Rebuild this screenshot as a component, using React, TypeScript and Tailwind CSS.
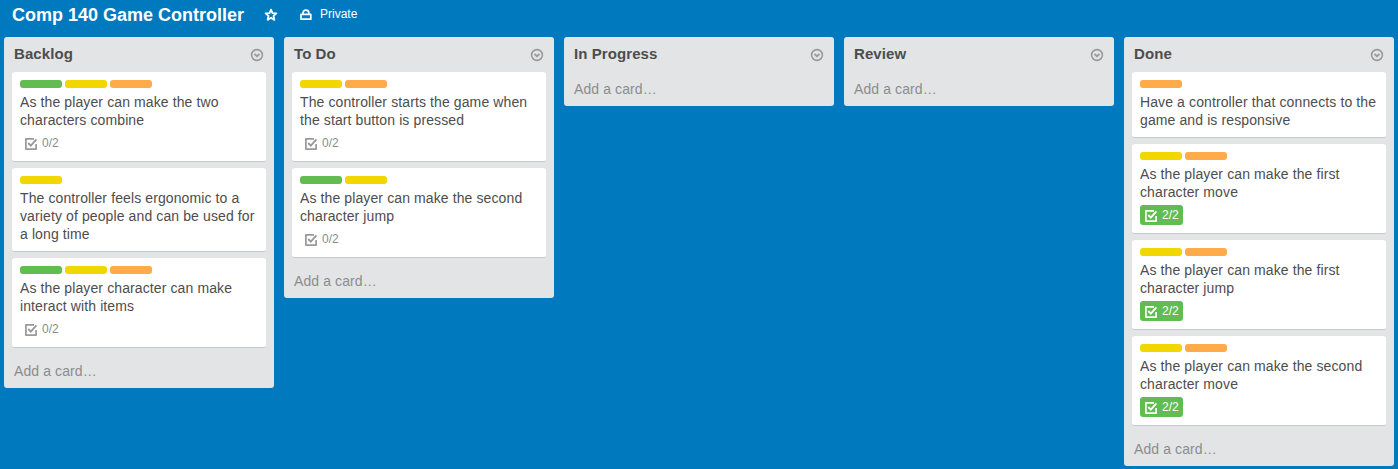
type Label = 'green' | 'yellow' | 'orange';

interface Card {
  labels: Label[];
  lines: string[];
  progress?: string;
  complete?: boolean;
}

interface List {
  title: string;
  cards: Card[];
}

const labelColors: Record<Label, string> = {
  green: 'bg-[#61bd4f]',
  yellow: 'bg-[#f2d600]',
  orange: 'bg-[#ffab4a]',
};

const lists: List[] = [
  {
    title: 'Backlog',
    cards: [
      { labels: ['green', 'yellow', 'orange'], lines: ['As the player can make the two', 'characters combine'], progress: '0/2' },
      { labels: ['yellow'], lines: ['The controller feels ergonomic to a', 'variety of people and can be used for', 'a long time'] },
      { labels: ['green', 'yellow', 'orange'], lines: ['As the player character can make', 'interact with items'], progress: '0/2' },
    ],
  },
  {
    title: 'To Do',
    cards: [
      { labels: ['yellow', 'orange'], lines: ['The controller starts the game when', 'the start button is pressed'], progress: '0/2' },
      { labels: ['green', 'yellow'], lines: ['As the player can make the second', 'character jump'], progress: '0/2' },
    ],
  },
  { title: 'In Progress', cards: [] },
  { title: 'Review', cards: [] },
  {
    title: 'Done',
    cards: [
      { labels: ['orange'], lines: ['Have a controller that connects to the', 'game and is responsive'] },
      { labels: ['yellow', 'orange'], lines: ['As the player can make the first', 'character move'], progress: '2/2', complete: true },
      { labels: ['yellow', 'orange'], lines: ['As the player can make the first', 'character jump'], progress: '2/2', complete: true },
      { labels: ['yellow', 'orange'], lines: ['As the player can make the second', 'character move'], progress: '2/2', complete: true },
    ],
  },
];

function StarIcon() {
  return (
    <svg width="14" height="14" viewBox="0 0 14 14" fill="none" stroke="currentColor" strokeWidth="1.8" strokeLinejoin="round">
      <path d="M7 1.6 8.5 5.1 12.4 5.4 9.5 7.9 10.4 11.9 7 9.8 3.6 11.9 4.5 7.9 1.6 5.4 5.5 5.1Z" />
    </svg>
  );
}

function LockIcon() {
  return (
    <svg width="12" height="12" viewBox="0 0 12 12" fill="none" stroke="currentColor" strokeWidth="1.7" strokeLinejoin="round">
      <path d="M1 5.3h9.8v4.9H1zM3 5.3V4a2.9 2.9 0 0 1 5.8 0v1.3" />
    </svg>
  );
}

function MenuIcon() {
  return (
    <svg width="14" height="14" viewBox="0 0 14 14" fill="none" stroke="currentColor">
      <circle cx="7" cy="7" r="5.4" strokeWidth="1.6" />
      <path d="M4.5 6 7 8.2 9.5 6" strokeWidth="1.8" />
    </svg>
  );
}

function ChecklistIcon() {
  return (
    <svg className="shrink-0" width="14" height="14" viewBox="0 0 14 14" fill="none" stroke="currentColor" strokeWidth="1.7">
      <path d="M10 1.9H1.9v10.2h10.2V7" strokeLinejoin="round" />
      <path d="M4.2 6 6.8 8.6 12.4 2.4" strokeWidth="1.9" />
    </svg>
  );
}

function CardView({ card }: { card: Card }) {
  return (
    <article className="mb-1.5 rounded-[3px] border-b border-[#c4c9cc] bg-white p-2">
      <div className="mb-[5px] flex gap-[3px]">
        {card.labels.map((label) => (
          <span key={label} className={`h-2 w-[42px] rounded-[3px] ${labelColors[label]}`} />
        ))}
      </div>
      <p className="text-[14px] leading-[18px] tracking-[0.11px] whitespace-nowrap text-[#4d4d4d]">
        {card.lines.map((line) => (
          <span key={line} className="block">{line}</span>
        ))}
      </p>
      {card.progress && (
        <div
          className={`mt-1 flex h-5 w-[43px] items-start rounded-[3px] pl-1 text-[12px] ${
            card.complete ? 'bg-[#61bd4f] text-white' : 'text-[#8c8c8c]'
          }`}
        >
          <span className={card.complete ? 'mt-1' : 'mt-1 text-[#999999]'}><ChecklistIcon /></span>
          <span className="ml-1 leading-5">{card.progress}</span>
        </div>
      )}
    </article>
  );
}

function ListView({ list }: { list: List }) {
  return (
    <section className="w-[270px] shrink-0 rounded-[3px] bg-[#e2e4e6] px-2">
      <header className="flex h-[35px] items-start justify-between px-0.5">
        <h2 className="pt-2 text-[15px] leading-[18px] font-bold tracking-[0.08px] text-[#4d4d4d]">{list.title}</h2>
        <span className="pt-[11px] text-[#999999]"><MenuIcon /></span>
      </header>
      {list.cards.map((card, i) => (
        <CardView key={i} card={card} />
      ))}
      <div className="h-[34px] pl-0.5 text-[14px] leading-[34px] tracking-[0.1px] text-[#8c8c8c]">Add a card…</div>
    </section>
  );
}

export default function App() {
  return (
    <main className="h-[469px] w-[1398px] overflow-hidden bg-[#0079bf] font-['Liberation_Sans',Arial,sans-serif]">
      <header className="flex h-[37px] items-start pl-3 text-white">
        <h1 className="w-[252px] pt-[5px] text-[18px] leading-5 font-bold">Comp 140 Game Controller</h1>
        <span className="w-9 pt-2"><StarIcon /></span>
        <span className="w-5 pt-[9px]"><LockIcon /></span>
        <span className="pt-1 text-[12px] leading-5">Private</span>
      </header>
      <div className="flex items-start gap-2.5 pl-1">
        {lists.map((list) => (
          <ListView key={list.title} list={list} />
        ))}
      </div>
    </main>
  );
}
